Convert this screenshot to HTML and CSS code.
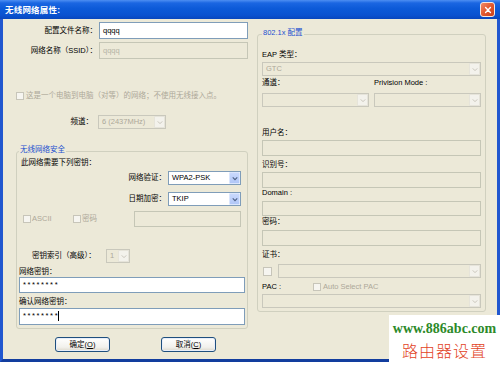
FILE: index.html
```html
<!DOCTYPE html>
<html lang="zh-CN">
<head>
<meta charset="utf-8">
<title>无线网络属性</title>
<link rel="stylesheet" href="styles.css">
</head>
<body>
<div class="window">
  <div class="titlebar">
    <span class="title">无线网络属性:</span>
    <span class="close"><svg viewBox="0 0 10 10" width="8" height="8"><path d="M2 2L8 8M8 2L2 8" stroke="#fff" stroke-width="1.8" stroke-linecap="round"/></svg></span>
  </div>
  <div class="frame">
    <div class="left">
      <div class="row r-profile">
        <span class="lbl-main">配置文件名称：</span>
        <div class="input in-main">qqqq</div>
      </div>
      <div class="row r-ssid">
        <span class="lbl-main">网络名称（SSID）：</span>
        <div class="input in-main dis">qqqq</div>
      </div>
      <div class="row r-adhoc">
        <span class="cb"></span>
        <span class="dtext">这是一个电脑到电脑（对等）的网络；不使用无线接入点。</span>
      </div>
      <div class="row r-channel">
        <span class="lbl-chan">频道：</span>
        <div class="select dis sel-chan"><span class="val">6 (2437MHz)</span><span class="arrow"><svg viewBox="0 0 8 6" width="6" height="5"><path d="M1 1.5L4 4.5L7 1.5" fill="none" stroke="#c3c1b6" stroke-width="1.2"/></svg></span></div>
      </div>

      <fieldset class="group g-sec">
        <legend>无线网络安全</legend>
        <div class="row r-need">此网络需要下列密钥：</div>
        <div class="row r-auth">
          <span class="lbl-sec">网络验证：</span>
          <div class="select on sel-sec"><span class="val">WPA2-PSK</span><span class="arrow"><svg viewBox="0 0 8 6" width="6" height="5"><path d="M1 1.5L4 4.5L7 1.5" fill="none" stroke="#4d6185" stroke-width="1.5"/></svg></span></div>
        </div>
        <div class="row r-enc">
          <span class="lbl-sec">日期加密：</span>
          <div class="select on sel-sec"><span class="val">TKIP</span><span class="arrow"><svg viewBox="0 0 8 6" width="6" height="5"><path d="M1 1.5L4 4.5L7 1.5" fill="none" stroke="#4d6185" stroke-width="1.5"/></svg></span></div>
        </div>
        <div class="row r-ascii">
          <span class="cb"></span><span class="dtext t-ascii">ASCII</span>
          <span class="cb"></span><span class="dtext">密码</span>
          <div class="input dis in-pass"></div>
        </div>
        <div class="row r-idx">
          <span class="lbl-idx">密钥索引（高级）：</span>
          <div class="select dis sel-idx"><span class="val">1</span><span class="arrow"><svg viewBox="0 0 8 6" width="6" height="5"><path d="M1 1.5L4 4.5L7 1.5" fill="none" stroke="#c3c1b6" stroke-width="1.2"/></svg></span></div>
        </div>
        <div class="row r-keylbl">网络密钥：</div>
        <div class="input in-key">********</div>
        <div class="row r-conflbl">确认网络密钥：</div>
        <div class="input in-key in-conf">********<span class="caret"></span></div>
      </fieldset>

      <div class="row r-btns">
        <span class="btn">确定(<u>O</u>)</span>
        <span class="btn">取消(<u>C</u>)</span>
      </div>
    </div>

    <div class="right">
      <fieldset class="group g-eap">
        <legend>802.1x 配置</legend>
        <div class="row r-eaplbl">EAP 类型：</div>
        <div class="select dis sel-full sel-eap"><span class="val">GTC</span><span class="arrow"><svg viewBox="0 0 8 6" width="6" height="5"><path d="M1 1.5L4 4.5L7 1.5" fill="none" stroke="#c3c1b6" stroke-width="1.2"/></svg></span></div>
        <div class="row r-tunlbl"><span class="half">通道：</span><span class="half">Privision Mode :</span></div>
        <div class="row r-tun">
          <div class="select dis sel-half"><span class="val"></span><span class="arrow"><svg viewBox="0 0 8 6" width="6" height="5"><path d="M1 1.5L4 4.5L7 1.5" fill="none" stroke="#c3c1b6" stroke-width="1.2"/></svg></span></div>
          <div class="select dis sel-half"><span class="val"></span><span class="arrow"><svg viewBox="0 0 8 6" width="6" height="5"><path d="M1 1.5L4 4.5L7 1.5" fill="none" stroke="#c3c1b6" stroke-width="1.2"/></svg></span></div>
        </div>
        <div class="row r-user">用户名：</div>
        <div class="input dis in-full in-user"></div>
        <div class="row r-id">识别号：</div>
        <div class="input dis in-full in-id"></div>
        <div class="row r-dom">Domain :</div>
        <div class="input dis in-full in-dom"></div>
        <div class="row r-pwd">密码：</div>
        <div class="input dis in-full in-pwd"></div>
        <div class="row r-cert">证书：</div>
        <div class="row r-certsel">
          <span class="cb cb-cert"></span>
          <div class="select dis sel-cert"><span class="val"></span><span class="arrow"><svg viewBox="0 0 8 6" width="6" height="5"><path d="M1 1.5L4 4.5L7 1.5" fill="none" stroke="#c3c1b6" stroke-width="1.2"/></svg></span></div>
        </div>
        <div class="row r-pac">
          <span class="pac-lbl">PAC :</span>
          <span class="cb"></span><span class="dtext">Auto Select PAC</span>
        </div>
        <div class="select dis sel-full sel-pac"><span class="val"></span><span class="arrow"><svg viewBox="0 0 8 6" width="6" height="5"><path d="M1 1.5L4 4.5L7 1.5" fill="none" stroke="#c3c1b6" stroke-width="1.2"/></svg></span></div>
      </fieldset>
    </div>
  </div>
</div>
<div class="watermark">
  <div class="wm-url">www.886abc.com</div>
  <div class="wm-cn">路由器设置</div>
</div>
</body>
</html>
```

FILE: styles.css
```css
* { box-sizing: border-box; }
html, body { margin: 0; padding: 0; }
body {
  width: 500px;
  height: 365px;
  overflow: hidden;
  position: relative;
  background: #ffffff;
  color: #000;
  font: 7.5px/10px "Liberation Sans", "Noto Sans CJK SC", sans-serif;
}

.window { width: 500px; }

.titlebar {
  height: 19px;
  display: flex;
  align-items: center;
  justify-content: space-between;
  padding: 0 5px 0 5px;
  background: linear-gradient(#4d8ef2 0, #1a66e2 3px, #0c5ad8 45%, #0a52d0 80%, #0846bd 100%);
}
.title {
  color: #fff;
  font-weight: bold;
  font-size: 8.5px;
  letter-spacing: 0.2px;
}
.close {
  width: 15px;
  height: 15px;
  border: 1px solid #f4e8e0;
  border-radius: 3px;
  background: linear-gradient(135deg, #f08a66 0%, #e2582e 50%, #c8401c 100%);
  display: flex;
  align-items: center;
  justify-content: center;
}

.frame {
  display: flex;
  height: 343px;
  background: #ece9d8;
  border: 3px solid #2157cf;
  border-top: 0;
  border-bottom-color: #123d9e;
}

.left {
  width: 249px;
  display: flex;
  flex-direction: column;
}
.right {
  margin-left: 5px;
  padding-top: 9px;
}

.row { display: flex; align-items: center; }

.input {
  border: 1px solid #7f9db9;
  background: #fff;
  padding: 0 3px;
  display: flex;
  align-items: center;
}
.input.dis {
  border-color: #c5c6b6;
  background: #ece9d8;
  color: #aca899;
}

.select {
  display: flex;
  align-items: stretch;
  height: 14px;
  border: 1px solid #7f9db9;
  background: #fff;
}
.select .val {
  flex: 1;
  display: flex;
  align-items: center;
  padding-left: 3px;
  white-space: nowrap;
  overflow: hidden;
}
.select .arrow {
  width: 11px;
  display: flex;
  align-items: center;
  justify-content: center;
}
.select.on .arrow {
  border: 1px solid #dbe6fd;
  background: linear-gradient(#c9d9fd, #b1c7f7);
  border-radius: 1px;
}
.select.dis {
  border-color: #c9c8bc;
  background: #ece9d8;
  color: #aca899;
}
.select.dis .arrow {
  border: 1px solid #e6e4da;
  background: #f3f2ec;
}

.cb {
  width: 8px;
  height: 8px;
  border: 1px solid #c7c5b9;
  background: #f6f5f0;
  flex: none;
}
.dtext { color: #aca899; white-space: nowrap; }

/* left column */
.lbl-main { width: 94px; text-align: right; white-space: nowrap; }
.in-main { width: 149px; height: 17px; margin-left: 2px; }
.in-main.dis { color: #b6b4a6; }
.r-profile { margin-top: 3px; height: 17px; }
.r-ssid { margin-top: 3px; height: 17px; }
.r-adhoc { margin-top: 32px; height: 10px; padding-left: 13px; }
.r-adhoc .dtext { margin-left: 2px; }
.r-channel { margin-top: 14px; height: 14px; }
.lbl-chan { width: 90px; text-align: right; }
.sel-chan { width: 68px; margin-left: 5px; }

.group {
  margin: 0;
  min-width: 0;
  border: 1px solid #d0d0bf;
  border-radius: 3px;
}
.group legend {
  color: #1c4fd0;
  line-height: 10px;
  padding: 0 1px 3px;
  white-space: nowrap;
}
.g-sec {
  width: 232px;
  margin: 16px 0 0 13px;
  padding: 0 2px 3px;
}
.r-need { height: 10px; padding-left: 2px; }
.r-auth { margin-top: 3px; height: 14px; justify-content: flex-end; padding-right: 4px; }
.r-enc { margin-top: 7px; height: 14px; justify-content: flex-end; padding-right: 4px; }
.lbl-sec { margin-right: 2px; }
.sel-sec { width: 73px; }
.r-ascii { margin-top: 5px; height: 16px; padding-left: 4px; }
.r-ascii .cb + .dtext { margin-left: 1px; }
.t-ascii { width: 41px; }
.in-pass { width: 107px; height: 16px; margin-left: auto; margin-right: 4px; }
.r-idx { margin-top: 22px; height: 14px; padding-left: 13px; }
.lbl-idx { width: 74px; white-space: nowrap; }
.sel-idx { width: 24px; margin-left: 0; }
.r-keylbl { margin-top: 4px; height: 10px; }
.in-key { width: 226px; height: 16px; letter-spacing: 1.6px; font-size: 7.5px; align-items: flex-start; padding-top: 2px; }
.r-conflbl { margin-top: 4px; height: 10px; }
.in-conf { height: 17px; margin-top: 1px; }
.caret { width: 1px; height: 10px; background: #000; margin-left: -1px; }

.r-btns { margin-top: 8px; height: 15px; padding-left: 52px; gap: 51px; }
.btn {
  width: 55px;
  height: 15px;
  border: 1px solid #1f4f7e;
  border-radius: 3px;
  background: linear-gradient(#ffffff, #f2f1ec 70%, #dcd8cc);
  box-shadow: inset 0 0 0 1px #e8eefa;
  display: flex;
  align-items: center;
  justify-content: center;
}

/* right column */
.g-eap {
  width: 229px;
  padding: 0 4px 3px;
}
.r-eaplbl { margin-top: 9px; height: 10px; }
.sel-full { width: 219px; }
.sel-eap { margin-top: 2px; }
.r-tunlbl { margin-top: 2px; height: 10px; gap: 5px; }
.half { width: 107px; }
.r-tun { margin-top: 5px; height: 14px; gap: 5px; }
.sel-half { width: 107px; }
.in-full { width: 219px; }
.r-user { margin-top: 21px; height: 10px; }
.in-user { margin-top: 2px; height: 16px; }
.r-id { margin-top: 4px; height: 10px; }
.in-id { margin-top: 2px; height: 16px; }
.r-dom { margin-top: 0; height: 10px; }
.in-dom { margin-top: 3px; height: 15px; }
.r-pwd { margin-top: 1px; height: 10px; }
.in-pwd { margin-top: 3px; height: 16px; }
.r-cert { margin-top: 4px; height: 10px; }
.r-certsel { margin-top: 4px; height: 14px; }
.cb-cert { width: 9px; height: 9px; margin-left: 1px; }
.sel-cert { width: 203px; margin-left: 6px; }
.r-pac { margin-top: 4px; height: 10px; }
.pac-lbl { width: 51px; }
.r-pac .cb { margin-right: 2px; }
.sel-pac { margin-top: 2px; }

/* watermark overlay */
.watermark {
  position: absolute;
  left: 389px;
  top: 315px;
  width: 111px;
  height: 50px;
  background: #fff;
  display: flex;
  flex-direction: column;
  align-items: center;
}
.wm-url {
  margin-top: 6px;
  font: bold 14px/16px "Liberation Serif", serif;
  color: #2d8a2a;
}
.wm-cn {
  margin-top: 3px;
  font: 300 16px/20px "Noto Sans CJK SC", sans-serif;
  letter-spacing: 1px;
  color: #e2441f;
}
```
